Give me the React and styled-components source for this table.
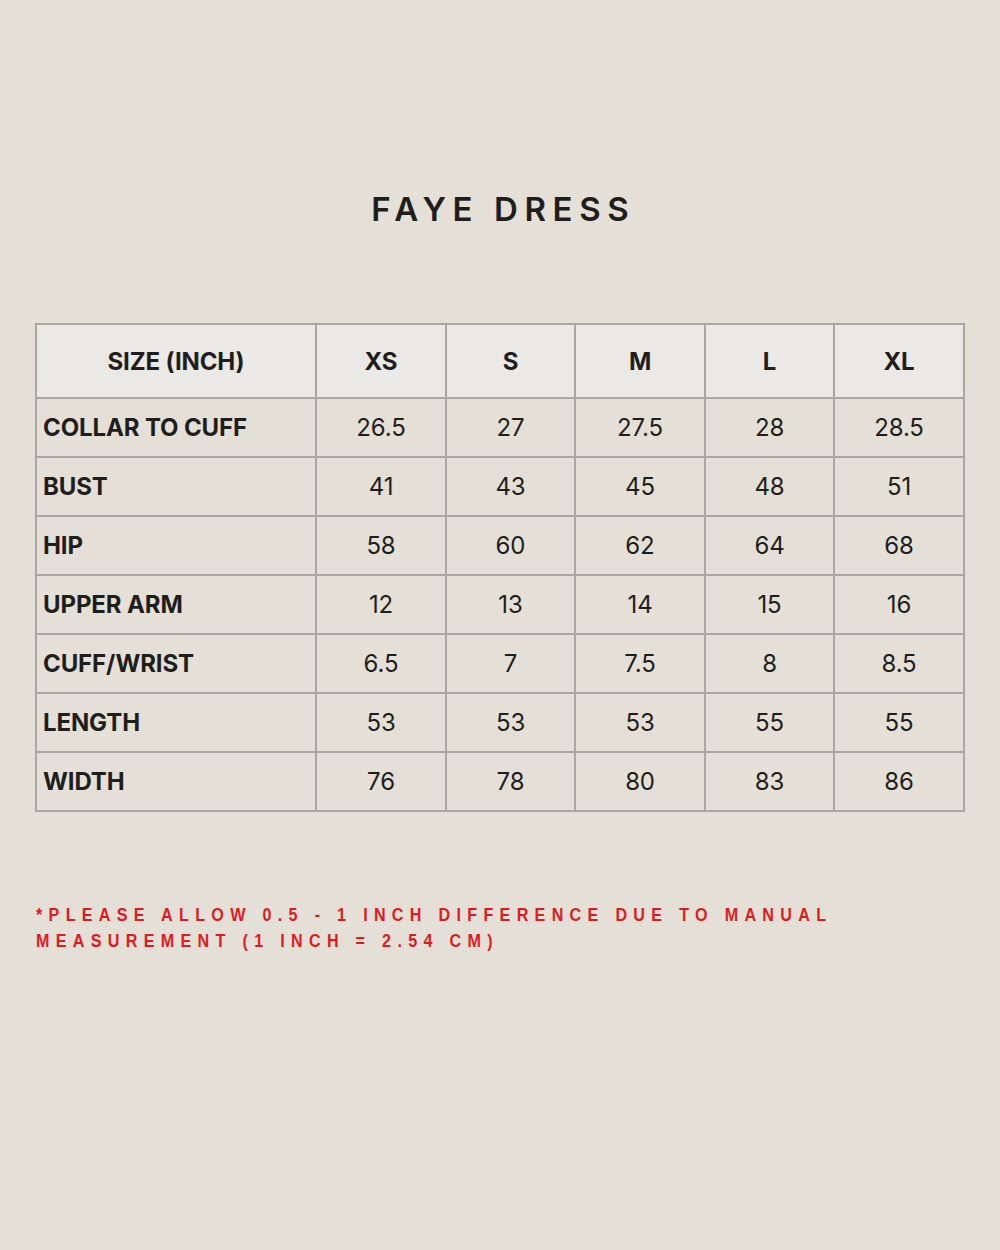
import React from 'react';
import styled, { createGlobalStyle } from 'styled-components';

const GlobalStyle = createGlobalStyle`
  html, body {
    margin: 0;
    padding: 0;
    background: #e4e0d7;
  }
`;

const Page = styled.div`
  width: 1000px;
  height: 1250px;
  box-sizing: border-box;
  padding: 191px 35px 0 35px;
  background: #e4e0d7;
  font-family: Inter, 'Noto Sans', sans-serif;
  color: #1f1e1c;
`;

const Title = styled.h1`
  margin: 0 0 96px 0;
  text-align: center;
  font-size: 33px;
  line-height: 36px;
  font-weight: 600;
  letter-spacing: 0.2em;
  padding-left: 0.2em;
`;

const Table = styled.table`
  width: 929px;
  border-collapse: collapse;
  table-layout: fixed;
`;

const Col = styled.col`
  width: ${(p) => p.$w}px;
`;

const HeadCell = styled.th`
  height: 72px;
  padding: 0;
  background: #ebe9e5;
  border: 2px solid #aaa7a2;
  font-size: 24px;
  font-weight: 700;
  text-align: center;
  letter-spacing: -0.005em;
`;

const Cell = styled.td`
  height: 57px;
  padding: 0 0 0 ${(p) => (p.$label ? '6px' : '0')};
  border: 2px solid #aaa7a2;
  font-size: 24px;
  font-weight: ${(p) => (p.$label ? 700 : 400)};
  text-align: ${(p) => (p.$label ? 'left' : 'center')};
  letter-spacing: -0.005em;
`;

const Note = styled.p`
  margin: 90px 0 0 1px;
  color: #e01b1f;
  font-family: 'Liberation Sans', Arial, sans-serif;
  font-weight: 700;
  font-size: 19px;
  line-height: 26px;
  letter-spacing: 7.4px;
  transform: scaleX(0.85);
  transform-origin: left;
  width: 1100px;
`;

const widths = [280, 130, 129, 130, 129, 130];

const sizes = ['XS', 'S', 'M', 'L', 'XL'];

const rows = [
  ['COLLAR TO CUFF', '26.5', '27', '27.5', '28', '28.5'],
  ['BUST', '41', '43', '45', '48', '51'],
  ['HIP', '58', '60', '62', '64', '68'],
  ['UPPER ARM', '12', '13', '14', '15', '16'],
  ['CUFF/WRIST', '6.5', '7', '7.5', '8', '8.5'],
  ['LENGTH', '53', '53', '53', '55', '55'],
  ['WIDTH', '76', '78', '80', '83', '86'],
];

export default function App() {
  return (
    <Page>
      <GlobalStyle />
      <Title>FAYE DRESS</Title>
      <Table>
        <colgroup>
          {widths.map((w, i) => (
            <Col key={i} $w={w} />
          ))}
        </colgroup>
        <thead>
          <tr>
            <HeadCell>SIZE (INCH)</HeadCell>
            {sizes.map((s) => (
              <HeadCell key={s}>{s}</HeadCell>
            ))}
          </tr>
        </thead>
        <tbody>
          {rows.map(([label, ...vals]) => (
            <tr key={label}>
              <Cell $label>{label}</Cell>
              {vals.map((v, i) => (
                <Cell key={i}>{v}</Cell>
              ))}
            </tr>
          ))}
        </tbody>
      </Table>
      <Note>
        *PLEASE ALLOW 0.5 - 1 INCH DIFFERENCE DUE TO MANUAL
        <br />
        MEASUREMENT (1 INCH = 2.54 CM)
      </Note>
    </Page>
  );
}
